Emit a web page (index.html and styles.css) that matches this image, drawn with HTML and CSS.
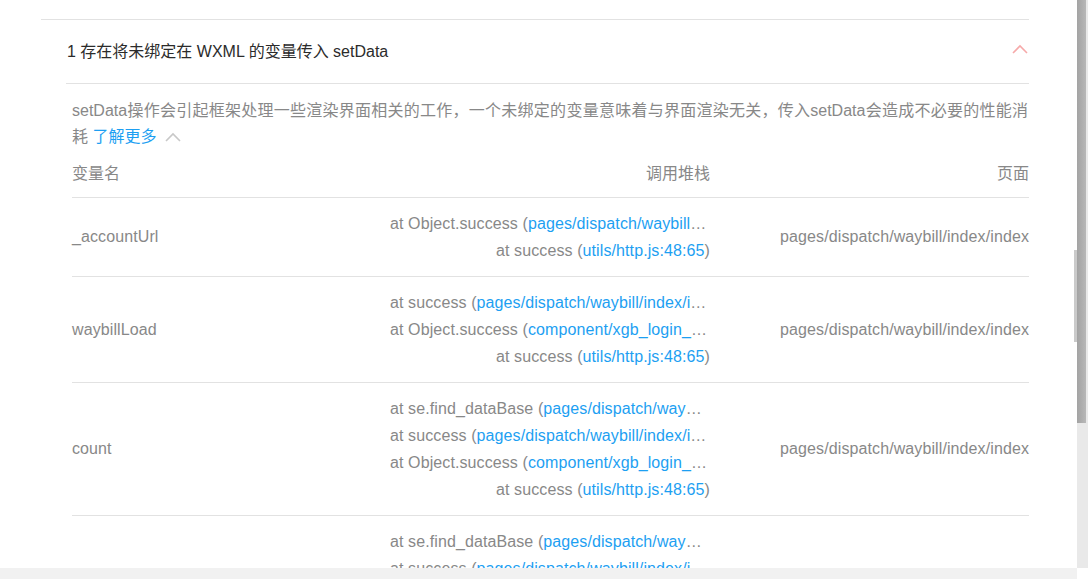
FILE: index.html
```html
<!DOCTYPE html>
<html lang="zh-CN">
<head>
    <meta charset="UTF-8">
    <title>setData 检查</title>
    <link rel="stylesheet" href="styles.css">
</head>
<body>
    <div class="frame">
        <div class="view">
            <div class="panel">
                <div class="issue-head">
                    <span>1 存在将未绑定在 WXML 的变量传入 setData</span>
                    <svg class="chev chev-red" width="16" height="10" viewBox="0 0 16 10"><path d="M1 9 L8 2 L15 9" fill="none" stroke="#f6a9a9" stroke-width="1.6"/></svg>
                </div>
                <div class="issue-body">
                    <p class="desc">setData操作会引起框架处理一些渲染界面相关的工作，一个未绑定的变量意味着与界面渲染无关，传入setData会造成不必要的性能消耗 <a class="link">了解更多</a><svg class="chev chev-grey" width="16" height="10" viewBox="0 0 16 10"><path d="M1 9 L8 2 L15 9" fill="none" stroke="#c8c8c8" stroke-width="1.6"/></svg></p>

                    <div class="table">
                        <div class="row head">
                            <div class="c-name">变量名</div>
                            <div class="c-stack">调用堆栈</div>
                            <div class="c-page">页面</div>
                        </div>

                        <div class="row">
                            <div class="c-name">_accountUrl</div>
                            <div class="c-stack">
                                <div class="line">at Object.success (<a class="link">pages/dispatch/waybill/index/index.js:120:13</a>)</div>
                                <div class="line">at success (<a class="link">utils/http.js:48:65</a>)</div>
                            </div>
                            <div class="c-page">pages/dispatch/waybill/index/index</div>
                        </div>

                        <div class="row">
                            <div class="c-name">waybillLoad</div>
                            <div class="c-stack">
                                <div class="line">at success (<a class="link">pages/dispatch/waybill/index/index.js:88:14</a>)</div>
                                <div class="line">at Object.success (<a class="link">component/xgb_login_popup/index.js:61:9</a>)</div>
                                <div class="line">at success (<a class="link">utils/http.js:48:65</a>)</div>
                            </div>
                            <div class="c-page">pages/dispatch/waybill/index/index</div>
                        </div>

                        <div class="row">
                            <div class="c-name">count</div>
                            <div class="c-stack">
                                <div class="line">at se.find_dataBase (<a class="link">pages/dispatch/waybill/index/index.js:201:9</a>)</div>
                                <div class="line">at success (<a class="link">pages/dispatch/waybill/index/index.js:88:14</a>)</div>
                                <div class="line">at Object.success (<a class="link">component/xgb_login_popup/index.js:61:9</a>)</div>
                                <div class="line">at success (<a class="link">utils/http.js:48:65</a>)</div>
                            </div>
                            <div class="c-page">pages/dispatch/waybill/index/index</div>
                        </div>

                        <div class="row">
                            <div class="c-name">list</div>
                            <div class="c-stack">
                                <div class="line">at se.find_dataBase (<a class="link">pages/dispatch/waybill/index/index.js:201:9</a>)</div>
                                <div class="line">at success (<a class="link">pages/dispatch/waybill/index/index.js:88:14</a>)</div>
                                <div class="line">at Object.success (<a class="link">component/xgb_login_popup/index.js:61:9</a>)</div>
                                <div class="line">at success (<a class="link">utils/http.js:48:65</a>)</div>
                            </div>
                            <div class="c-page">pages/dispatch/waybill/index/index</div>
                        </div>
                    </div>
                </div>
            </div>
        </div>
        <div class="vscroll">
            <div class="inner-thumb"></div>
            <div class="thumb"></div>
        </div>
    </div>
    <div class="hbar"></div>
</body>
</html>
```

FILE: styles.css
```css
html, body {
    margin: 0;
    padding: 0;
    background: #fff;
    overflow: hidden;
}
body {
    font-family: "Liberation Sans", Arial, "Noto Sans CJK SC", sans-serif;
    font-size: 16px;
    color: #888;
    width: 1088px;
    height: 579px;
}
.frame {
    display: flex;
    height: 568px;
}
.view {
    width: 1077px;
    height: 568px;
    overflow: hidden;
    position: relative;
}
.panel {
    margin: 19px 0 0 41px;
    width: 988px;
    border-top: 1px solid #e2e2e2;
}
.issue-head {
    display: flex;
    justify-content: space-between;
    align-items: center;
    height: 59px;
    padding: 0 1px 4px 26px;
    color: #2b2b2b;
}
.chev {
    display: inline-block;
}
.chev-red {
    margin-top: -2px;
}
.issue-body {
    margin-left: 25px;
    border-top: 1px solid #e2e2e2;
    padding-left: 6px;
}
.desc {
    margin: 0;
    padding-top: 14px;
    width: 956px;
    line-height: 26px;
    text-align: justify;
}
.link {
    color: #1d9ff2;
    cursor: pointer;
}
.chev-grey {
    margin-left: 9px;
    vertical-align: 0;
}
.table {
    width: 957px;
    letter-spacing: 0.1px;
}
.row {
    display: grid;
    grid-template-columns: 318px 320px 319px;
    align-items: center;
    border-bottom: 1px solid #e2e2e2;
    padding: 12px 0;
}
.row.head {
    padding: 12px 0 11px;
    line-height: 24px;
    letter-spacing: 0;
}
.c-stack, .c-page {
    text-align: right;
}
.line {
    line-height: 27px;
    white-space: nowrap;
    overflow: hidden;
    text-overflow: ellipsis;
}
.c-page {
    white-space: nowrap;
}
.vscroll {
    width: 11px;
    height: 568px;
    background: #e9e9e9;
    position: relative;
}
.thumb {
    position: absolute;
    left: 0;
    top: 0;
    width: 9px;
    height: 423px;
    background: linear-gradient(to right, #a3a3a3, #b8b8b8);
}
.inner-thumb {
    position: absolute;
    left: -3px;
    top: 250px;
    width: 3px;
    height: 92px;
    background: #cacaca;
}
.hbar {
    height: 11px;
    width: 1077px;
    background: #f1f1f1;
}
```
